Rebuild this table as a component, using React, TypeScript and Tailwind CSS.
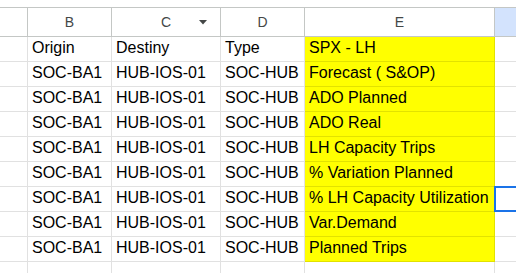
import React from 'react';

const rows = [
  ['Origin', 'Destiny', 'Type', 'SPX - LH'],
  ['SOC-BA1', 'HUB-IOS-01', 'SOC-HUB', 'Forecast ( S&OP)'],
  ['SOC-BA1', 'HUB-IOS-01', 'SOC-HUB', 'ADO Planned'],
  ['SOC-BA1', 'HUB-IOS-01', 'SOC-HUB', 'ADO Real'],
  ['SOC-BA1', 'HUB-IOS-01', 'SOC-HUB', 'LH Capacity Trips'],
  ['SOC-BA1', 'HUB-IOS-01', 'SOC-HUB', '% Variation Planned'],
  ['SOC-BA1', 'HUB-IOS-01', 'SOC-HUB', '% LH Capacity Utilization'],
  ['SOC-BA1', 'HUB-IOS-01', 'SOC-HUB', 'Var.Demand'],
  ['SOC-BA1', 'HUB-IOS-01', 'SOC-HUB', 'Planned Trips'],
];

const cols = 'grid grid-cols-[28px_84px_109px_84px_190px_1fr]';

export default function App() {
  return (
    <div className="w-[516px] h-[273px] overflow-hidden bg-white font-['Liberation_Sans',Arial,sans-serif]">
      <div className="h-[7px]" />
      {/* column headers */}
      <div className={`${cols} h-[30px] border-t border-b border-[#c4c7c5] text-[14px] text-[#444746]`}>
        <div className="border-r border-[#c4c7c5]" />
        <div className="border-r border-[#c4c7c5] flex items-center justify-center">B</div>
        <div className="border-r border-[#c4c7c5] relative flex items-center justify-center">
          C
          <svg className="absolute left-[87px] top-[12px]" width="8" height="5" viewBox="0 0 8 5">
            <path d="M0 0 L8 0 L4 4.5 Z" fill="#444746" />
          </svg>
        </div>
        <div className="border-r border-[#c4c7c5] flex items-center justify-center">D</div>
        <div className="border-r border-[#c4c7c5] flex items-center justify-center">E</div>
        <div className="bg-[#d3e3fd]" />
      </div>
      {rows.map((r, i) => (
        <div key={i} className={`${cols} h-[25px] text-[16px] text-black leading-none`}>
          <div className="border-r border-b border-[#e1e1e1]" />
          {r.slice(0, 3).map((c, j) => (
            <div key={j} className="border-r border-b border-[#e1e1e1] flex items-end pl-[4px] pb-[5px] whitespace-nowrap">
              {c}
            </div>
          ))}
          <div className="bg-[#ffff00] border-r border-b border-[#e2e200] flex items-end pl-[4px] pb-[5px] whitespace-nowrap">
            {r[3]}
          </div>
          <div className="relative border-b border-[#e1e1e1]">
            {i === 6 && (
              <div className="absolute -top-[1px] -left-[1px] w-[40px] h-[26px] border-2 border-[#1a73e8]" />
            )}
          </div>
        </div>
      ))}
      <div className={`${cols} h-[12px]`}>
        <div className="border-r border-[#e1e1e1]" />
        <div className="border-r border-[#e1e1e1]" />
        <div className="border-r border-[#e1e1e1]" />
        <div className="border-r border-[#e1e1e1]" />
        <div className="border-r border-[#e1e1e1]" />
        <div />
      </div>
    </div>
  );
}
